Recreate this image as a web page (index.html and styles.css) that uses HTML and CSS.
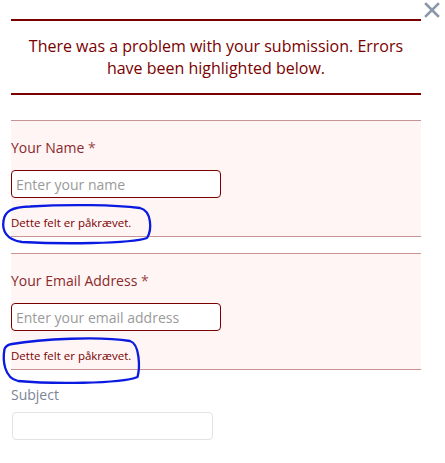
FILE: index.html
```html
<!DOCTYPE html>
<html lang="en">
<head>
<meta charset="utf-8">
<title>Contact form</title>
<link rel="stylesheet" href="styles.css">
</head>
<body>
<div class="modal">
  <button class="close" aria-label="Close">
    <svg width="16" height="16" viewBox="0 0 16 16"><path d="M2 2 L14 14 M14 2 L2 14" stroke="#8d96aa" stroke-width="2.6" stroke-linecap="square" fill="none"/></svg>
  </button>
  <form class="form">
    <div class="banner">There was a problem with your submission. Errors have been highlighted below.</div>

    <div class="field field-error field-first">
      <label class="label">Your Name <span class="req">*</span></label>
      <input class="input input-error" type="text" placeholder="Enter your name">
      <div class="msg">Dette felt er påkrævet.</div>
    </div>

    <div class="field field-error field-next">
      <label class="label">Your Email Address <span class="req">*</span></label>
      <input class="input input-error" type="text" placeholder="Enter your email address">
      <div class="msg">Dette felt er påkrævet.</div>
    </div>

    <div class="field field-plain">
      <label class="label label-plain">Subject</label>
      <input class="input input-plain" type="text">
    </div>
  </form>
  <svg class="marks" width="445" height="463" viewBox="0 0 445 463">
    <path d="M 30 206.5 C 70 204, 115 205, 140 208 C 152 211, 152 230, 147 238 C 130 244, 60 244, 22 242 C 6 240, 2 230, 3.5 221 C 4.5 211, 12 207, 30 206.5 Z" />
    <path d="M 12 344 C 40 339, 100 336, 130 341 C 140 344, 140 368, 137.5 377 C 120 384, 50 384, 18 381 C 4 378, 2.5 360, 4.5 349 C 6 345, 9 344.5, 12 344 Z" />
  </svg>
</div>
</body>
</html>
```

FILE: styles.css
```css
* { box-sizing: border-box; }
html, body { margin: 0; padding: 0; background: #fff; }
body { width: 445px; height: 463px; overflow: hidden; }

.modal {
  position: relative;
  width: 445px;
  height: 463px;
  font-family: "Open Sans", "Liberation Sans", sans-serif;
}

.close {
  position: absolute;
  top: 2px;
  left: 424px;
  width: 16px;
  height: 16px;
  padding: 0;
  border: 0;
  background: none;
  display: flex;
}

.form {
  display: flex;
  flex-direction: column;
  width: 410px;
  margin-left: 11px;
  padding-top: 19px;
}

.banner {
  border-top: 2px solid #7a0000;
  border-bottom: 2px solid #7a0000;
  padding: 14px 10px;
  text-align: center;
  color: #7a0000;
  font-size: 16px;
  line-height: 22px;
  font-weight: 500;
}

.field { display: flex; flex-direction: column; align-items: flex-start; }

.field-error {
  background: #fff5f5;
  border-top: 1px solid #c99293;
  border-bottom: 1px solid #c99293;
  padding: 17px 0 5px;
}
.field-first { margin-top: 25px; }
.field-next { margin-top: 16px; }

.label {
  font-size: 14px;
  line-height: 20px;
  color: #8a2a2a;
}
.req { color: #a04545; }

.input {
  font-family: inherit;
  font-size: 14px;
  padding: 0 4px;
  outline: none;
  background: #fff;
}
.input::placeholder { color: #9a9a9a; }

.input-error {
  margin-top: 12px;
  width: 210px;
  height: 28px;
  border: 1px solid #7a0000;
  border-radius: 4px;
}

.msg {
  margin-top: 17px;
  font-size: 11.5px;
  line-height: 16px;
  color: #7a0000;
  font-weight: 500;
}

.field-plain { padding-top: 15px; }
.label-plain { color: #7c8495; }
.input-plain {
  margin-top: 7px;
  margin-left: 1px;
  width: 201px;
  height: 28px;
  border: 1px solid #e3e3e3;
  border-radius: 4px;
}

.marks {
  position: absolute;
  left: 0;
  top: 0;
  pointer-events: none;
}
.marks path {
  fill: none;
  stroke: #0a1ae0;
  stroke-width: 2.3;
  stroke-linecap: round;
  stroke-linejoin: round;
}
```
